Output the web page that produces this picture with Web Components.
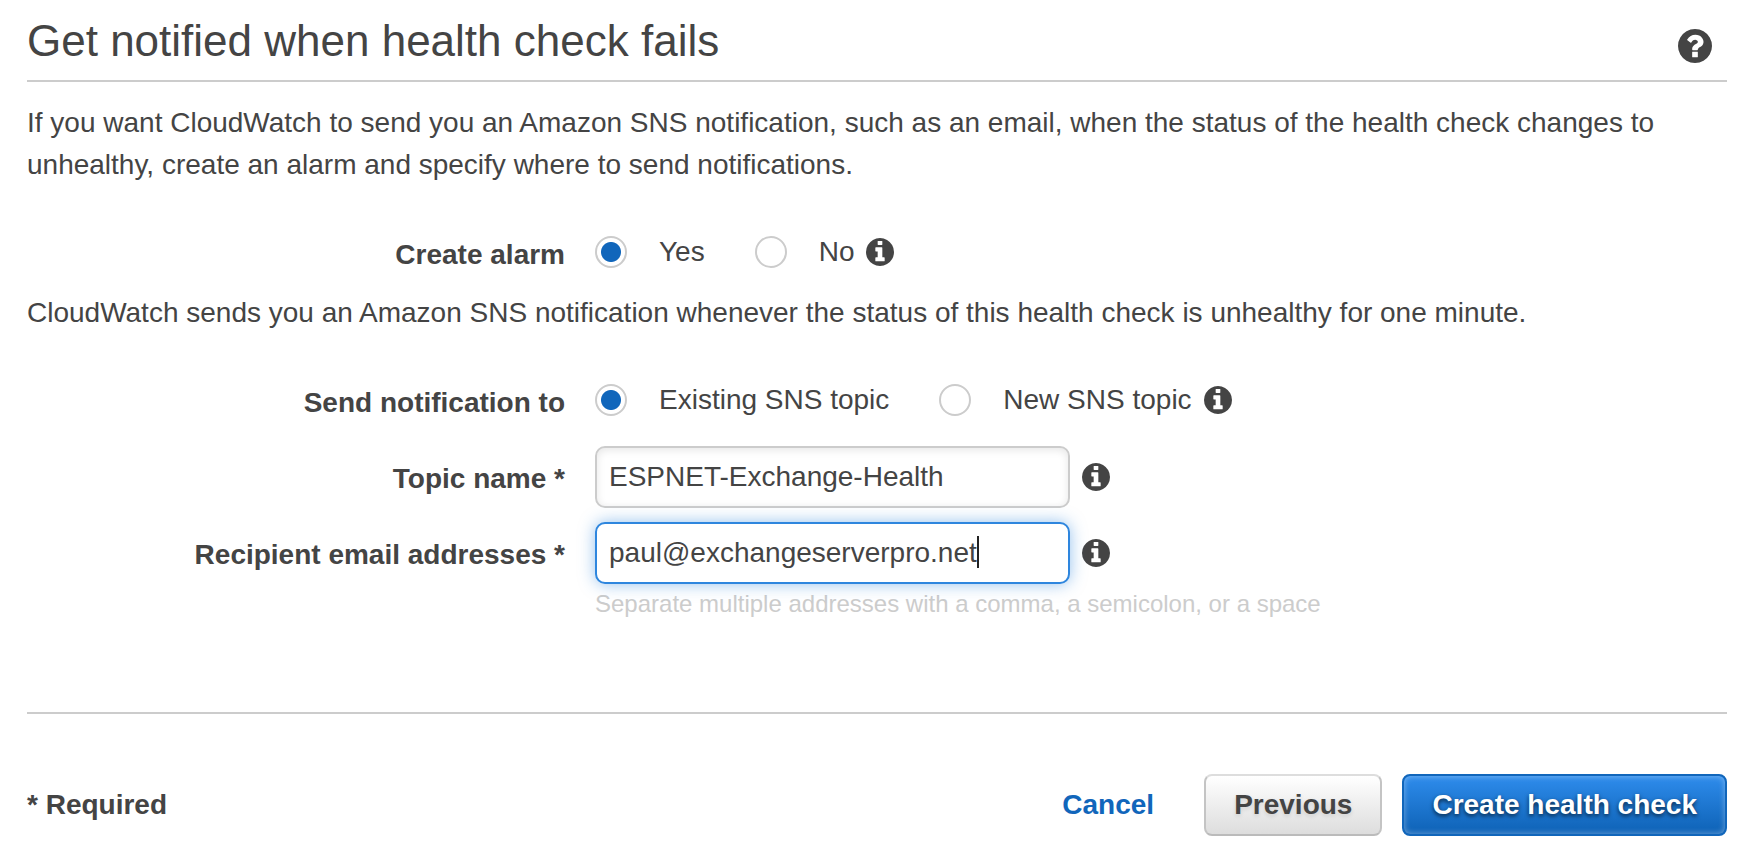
<!DOCTYPE html>
<html lang="en">
<head>
<meta charset="utf-8">
<title>Create health check</title>
<style>
	:root {
		--text: #444;
		--line: #ccc;
		--blue: #1166bb;
		--focus: #2e86de;
	}

	body {
		margin: 0;
		background: #fff;
		color: var(--text);
		font: 28px/42px "Liberation Sans", Arial, sans-serif;
	}

	p {
		margin: 0;
	}

	.intro {
		margin-bottom: 45px;
	}

	.note {
		margin: 16px 0 45px;
	}

	text-row {
		margin-top: 14px;
	}

	radio-row + text-row {
		margin-top: 22px;
	}
</style>
</head>
<body>
	<wizard-panel>
		<span slot="title">Get notified when health check fails</span>
		<p class="intro">If you want CloudWatch to send you an Amazon SNS notification, such as an email, when the status of the health check changes to unhealthy, create an alarm and specify where to send notifications.</p>
		<radio-row label="Create alarm" options="Yes,No"></radio-row>
		<p class="note">CloudWatch sends you an Amazon SNS notification whenever the status of this health check is unhealthy for one minute.</p>
		<radio-row label="Send notification to" options="Existing SNS topic,New SNS topic"></radio-row>
		<text-row label="Topic name" value="ESPNET-Exchange-Health"></text-row>
		<text-row label="Recipient email addresses" value="paul@exchangeserverpro.net" hint="Separate multiple addresses with a comma, a semicolon, or a space" active></text-row>
		<link-button slot="actions">Cancel</link-button>
		<push-button slot="actions">Previous</push-button>
		<push-button slot="actions" primary>Create health check</push-button>
	</wizard-panel>

<script>
	const circle = "M1664 896q0 209-103 385.5t-279.5 279.5-385.5 103-385.5-103-279.5-279.5-103-385.5 103-385.5 279.5-279.5 385.5-103 385.5 103 279.5 279.5 103 385.5z";
	const icons = {
		info: "M1152 1376v-160q0-14-9-23t-23-9h-96v-512q0-14-9-23t-23-9h-320q-14 0-23 9t-9 23v160q0 14 9 23t23 9h96v320h-96q-14 0-23 9t-9 23v160q0 14 9 23t23 9h448q14 0 23-9t9-23zm-128-896v-160q0-14-9-23t-23-9h-192q-14 0-23 9t-9 23v160q0 14 9 23t23 9h192q14 0 23-9t9-23z",
		help: "M1024 1376v-192q0-14-9-23t-23-9h-192q-14 0-23 9t-9 23v192q0 14 9 23t23 9h192q14 0 23-9t9-23zm256-672q0-88-55.5-163t-138.5-116-170-41q-243 0-371 213-15 24 8 42l132 100q7 6 19 6 16 0 25-12 53-68 86-92 34-24 86-24 48 0 85.5 26t37.5 59q0 38-20 61t-68 45q-63 28-115.5 86.5t-52.5 125.5v36q0 14 9 23t23 9h192q14 0 23-9t9-23q0-19 21.5-49.5t54.5-49.5q32-18 49-28.5t46-35 44.5-48 28-60.5 12.5-81z",
	};

	const rowStyle = `
		:host {
			display: grid;
			grid-template-columns: 1fr 2fr;
			column-gap: 2px;
		}

		.label {
			padding: 3px 28px 0 0;
			text-align: right;
			font-weight: bold;
		}
	`;

	class HelpIcon extends HTMLElement {
		constructor() {
			super();
			this.attachShadow({ mode: "open" });
		}

		connectedCallback() {
			const name = this.getAttribute("name") || "info";
			this.shadowRoot.innerHTML = `
				<style>
					:host {
						display: block;
						flex: none;
						width: 28px;
						height: 28px;
					}

					:host([name="help"]) {
						width: 34px;
						height: 34px;
					}

					button {
						display: block;
						width: 100%;
						height: 100%;
						padding: 0;
						border: 0;
						background: none;
						color: inherit;
						cursor: pointer;
					}

					svg {
						display: block;
						width: 100%;
						height: 100%;
					}
				</style>
				<button type="button" aria-label="${name}">
					<svg viewBox="128 128 1536 1536" fill="currentColor" fill-rule="evenodd"><path d="${icons[name]}${circle}"/></svg>
				</button>
			`;
		}
	}

	const panelTemplate = document.createElement("template");
	panelTemplate.innerHTML = `
		<style>
			:host {
				display: block;
				padding: 15px 11px 20px 27px;
			}

			header {
				display: flex;
				justify-content: space-between;
				align-items: flex-end;
				padding: 0 15px 13px 0;
				margin-bottom: 20px;
				border-bottom: 2px solid var(--line);
			}

			h1 {
				margin: 0;
				font-size: 44px;
				line-height: 52px;
				font-weight: normal;
			}

			help-icon {
				margin-bottom: 4px;
			}

			footer {
				display: flex;
				align-items: center;
				justify-content: space-between;
				margin-top: 92px;
				padding-top: 60px;
				border-top: 2px solid var(--line);
			}

			.required {
				font-weight: bold;
			}

			.actions {
				display: flex;
				align-items: center;
				gap: 20px;
			}
		</style>
		<header>
			<h1><slot name="title"></slot></h1>
			<help-icon name="help"></help-icon>
		</header>
		<main><slot></slot></main>
		<footer>
			<div class="required">* Required</div>
			<div class="actions"><slot name="actions"></slot></div>
		</footer>
	`;

	class WizardPanel extends HTMLElement {
		constructor() {
			super();
			this.attachShadow({ mode: "open" });
			this.shadowRoot.appendChild(panelTemplate.content.cloneNode(true));
		}
	}

	class RadioRow extends HTMLElement {
		constructor() {
			super();
			this.attachShadow({ mode: "open" });
		}

		connectedCallback() {
			const options = this.getAttribute("options").split(",");
			this.shadowRoot.innerHTML = `
				<style>
					${rowStyle}

					.options {
						display: flex;
						align-items: center;
						height: 42px;
					}

					label {
						display: flex;
						align-items: center;
						gap: 32px;
					}

					label + label {
						margin-left: 50px;
					}

					input {
						appearance: none;
						width: 32px;
						height: 32px;
						margin: 0;
						border: 2px solid var(--line);
						border-radius: 50%;
						background: #fff;
					}

					input:checked {
						background: radial-gradient(circle, var(--blue) 0 9.5px, #fff 10.5px);
					}

					help-icon {
						margin-left: 12px;
					}
				</style>
				<div class="label" id="label">${this.getAttribute("label")}</div>
				<div class="options" role="radiogroup" aria-labelledby="label">
					${options.map((text, i) => `<label><input type="radio" name="choice" ${i === 0 ? "checked" : ""}><span>${text}</span></label>`).join("")}
					<help-icon></help-icon>
				</div>
			`;
		}
	}

	class TextRow extends HTMLElement {
		constructor() {
			super();
			this.attachShadow({ mode: "open" });
		}

		connectedCallback() {
			const hint = this.getAttribute("hint");
			this.shadowRoot.innerHTML = `
				<style>
					${rowStyle}

					.label {
						padding-top: 12px;
					}

					.control {
						display: flex;
						align-items: center;
						gap: 12px;
					}

					.box {
						position: relative;
						width: 42%;
					}

					input {
						display: block;
						box-sizing: border-box;
						width: 100%;
						height: 62px;
						padding: 0 12px;
						border: 2px solid var(--line);
						border-radius: 10px;
						outline: none;
						background: #fff;
						color: inherit;
						font: inherit;
						box-shadow: inset 0 2px 8px rgba(0, 0, 0, 0.1);
					}

					:host([active]) input {
						border-color: var(--focus);
						box-shadow: 0 0 16px rgba(46, 134, 222, 0.5);
						caret-color: transparent;
					}

					.caret {
						position: absolute;
						top: 14px;
						width: 2px;
						height: 32px;
						background: #222;
					}

					.hint {
						margin-top: 4px;
						color: var(--line);
						font-size: 24px;
						line-height: 32px;
					}
				</style>
				<label class="label" for="field">${this.getAttribute("label")} *</label>
				<div>
					<div class="control">
						<div class="box"><input id="field" type="text" required></div>
						<help-icon></help-icon>
					</div>
					${hint ? `<div class="hint">${hint}</div>` : ""}
				</div>
			`;
			const input = this.shadowRoot.querySelector("input");
			input.value = this.getAttribute("value");
			if (this.hasAttribute("active")) {
				this.drawCaret(input);
				input.addEventListener("input", () => this.drawCaret(input));
			}
		}

		// keeps a steady caret at the end of the value
		drawCaret(input) {
			let caret = this.shadowRoot.querySelector(".caret");
			if (!caret) {
				caret = document.createElement("span");
				caret.className = "caret";
				input.after(caret);
			}
			const style = getComputedStyle(input);
			const ctx = document.createElement("canvas").getContext("2d");
			ctx.font = `${style.fontSize} ${style.fontFamily}`;
			const start = parseInt(style.paddingLeft) + parseInt(style.borderLeftWidth);
			caret.style.left = `${start + Math.round(ctx.measureText(input.value).width)}px`;
		}
	}

	class PushButton extends HTMLElement {
		constructor() {
			super();
			this.attachShadow({ mode: "open" });
			this.shadowRoot.innerHTML = `
				<style>
					:host {
						display: block;
					}

					button {
						display: block;
						height: 62px;
						padding: 0 28px;
						border: 2px solid;
						border-color: #ddd #c4c4c4 #bbb;
						border-radius: 8px;
						background: linear-gradient(#fff, #ddd);
						color: inherit;
						font: inherit;
						font-weight: bold;
						white-space: nowrap;
						text-shadow: 0 2px 4px rgba(0, 0, 0, 0.12);
						cursor: pointer;
					}

					:host([primary]) button {
						border-color: var(--blue);
						background: linear-gradient(#2e8cec, #1166bb 90%);
						color: #fff;
						text-shadow: 0 2px 4px rgba(0, 0, 0, 0.7);
						box-shadow: inset 0 0 6px rgba(255, 255, 255, 0.4);
					}
				</style>
				<button type="button"><slot></slot></button>
			`;
		}
	}

	class LinkButton extends HTMLElement {
		constructor() {
			super();
			this.attachShadow({ mode: "open" });
			this.shadowRoot.innerHTML = `
				<style>
					:host {
						display: block;
						margin-right: 30px;
					}

					a {
						color: var(--blue);
						font-weight: bold;
						text-decoration: none;
					}
				</style>
				<a href="#"><slot></slot></a>
			`;
		}
	}

	customElements.define("help-icon", HelpIcon);
	customElements.define("wizard-panel", WizardPanel);
	customElements.define("radio-row", RadioRow);
	customElements.define("text-row", TextRow);
	customElements.define("push-button", PushButton);
	customElements.define("link-button", LinkButton);
</script>
</body>
</html>
